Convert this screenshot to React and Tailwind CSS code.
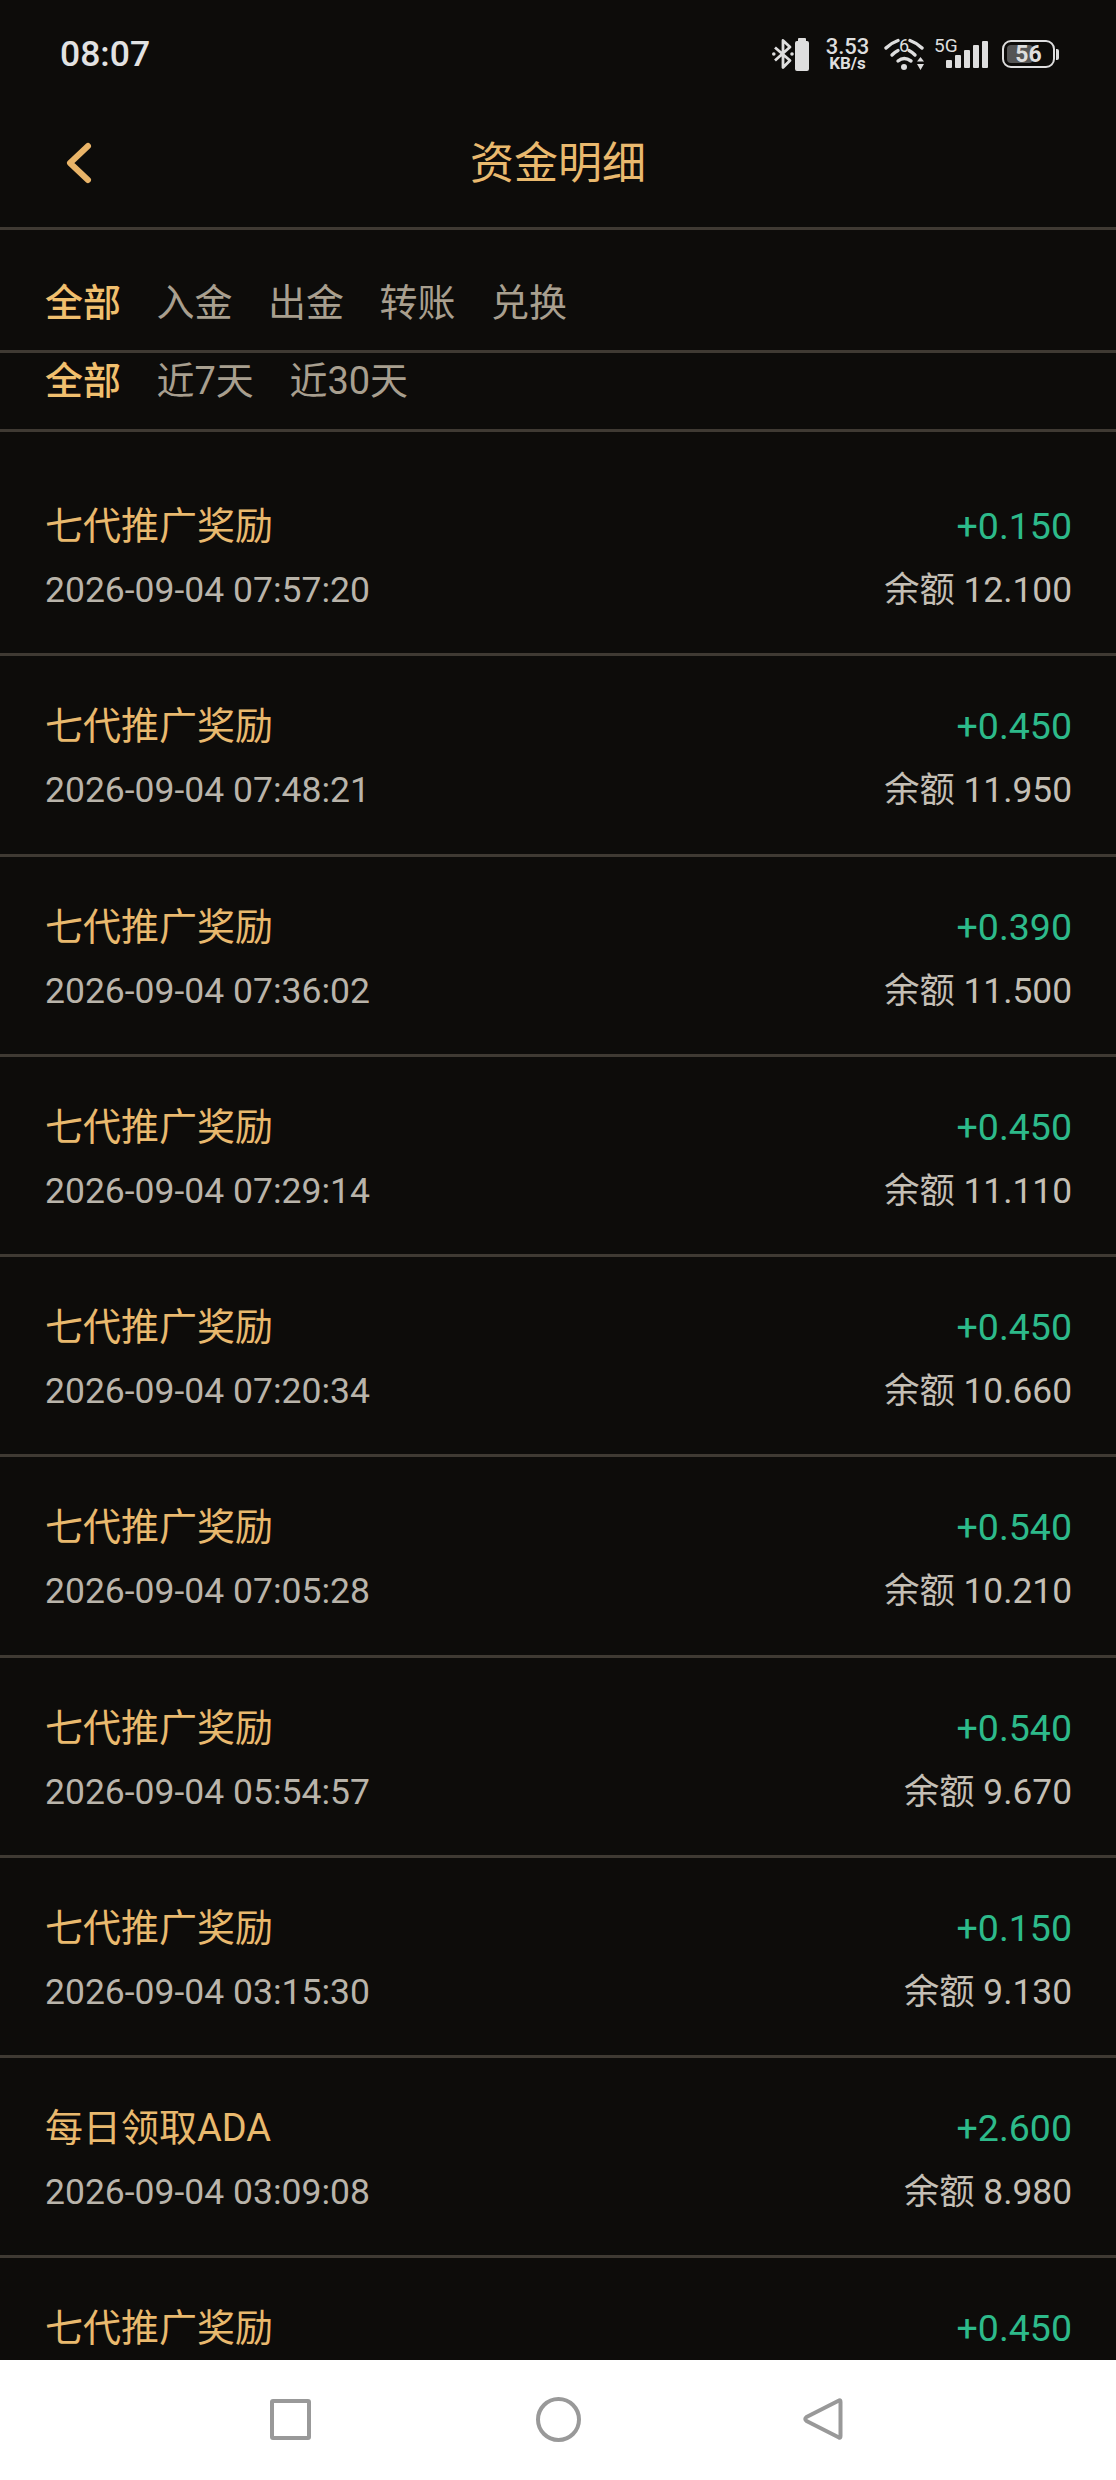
const rows = [
  ['七代推广奖励', '2026-09-04 07:57:20', '+0.150', '12.100'],
  ['七代推广奖励', '2026-09-04 07:48:21', '+0.450', '11.950'],
  ['七代推广奖励', '2026-09-04 07:36:02', '+0.390', '11.500'],
  ['七代推广奖励', '2026-09-04 07:29:14', '+0.450', '11.110'],
  ['七代推广奖励', '2026-09-04 07:20:34', '+0.450', '10.660'],
  ['七代推广奖励', '2026-09-04 07:05:28', '+0.540', '10.210'],
  ['七代推广奖励', '2026-09-04 05:54:57', '+0.540', '9.670'],
  ['七代推广奖励', '2026-09-04 03:15:30', '+0.150', '9.130'],
  ['每日领取ADA', '2026-09-04 03:09:08', '+2.600', '8.980'],
  ['七代推广奖励', '2026-09-04 03:00:00', '+0.450', '8.530'],
];

function StatusIcons() {
  return (
    <div className="flex items-center text-[#dedede]">
      <svg width="37" height="34" viewBox="0 0 37 34" className="mr-[18px]">
        <path d="M3 10.500l15 13-7 7V3.500l7 6.500L3 23.500" fill="none" stroke="#dedede" strokeWidth="2.800" strokeLinejoin="round" />
        <circle cx="1.800" cy="17" r="1.800" fill="#dedede" />
        <circle cx="20" cy="17" r="1.800" fill="#dedede" />
        <path d="M23 6q0-2 2-2h1V2q0-1 1-1h6q1 0 1 1v2h1q2 0 2 2v26q0 2-2 2H25q-2 0-2-2z" fill="#dedede" />
      </svg>
      <div className="w-[41px] flex flex-col items-center mr-[16px] font-medium">
        <span className="text-[22px] leading-[19px]">3.53</span>
        <span className="text-[17px] leading-[15px] font-bold">KB/s</span>
      </div>
      <div className="relative w-[42px] h-[34px] mr-[8px]">
        <svg width="42" height="34" viewBox="0 0 42 34">
          <path d="M2 11Q7 6 14 3.500M26 3.500Q33 6 38 11" fill="none" stroke="#dedede" strokeWidth="3.400" strokeLinecap="round" />
          <path d="M8 18Q11 15 14 13.500M25 13.500Q28 15 31 18" fill="none" stroke="#dedede" strokeWidth="3.400" strokeLinecap="round" />
          <path d="M14 24Q20 19 27 24" fill="none" stroke="#dedede" strokeWidth="3.400" strokeLinecap="round" />
          <circle cx="20" cy="30" r="3" fill="#dedede" />
          <path d="M33 24.500l3.500-4.500 3.500 4.500zM33 27l3.500 6 3.500-6z" fill="#dedede" />
        </svg>
        <span className="absolute left-[15px] top-[-1px] text-[18px] leading-[20px]">6</span>
      </div>
      <div className="relative w-[54px] h-[34px] mr-[14px]">
        <span className="absolute left-0 top-[-1px] text-[19px] leading-[19px]">5G</span>
        <div className="absolute left-[12px] bottom-[3px] flex items-end gap-[3.500px]">
          <div className="w-[5.500px] h-[8px] bg-[#dedede] rounded-[1px]" />
          <div className="w-[5.500px] h-[13px] bg-[#dedede] rounded-[1px]" />
          <div className="w-[5.500px] h-[18px] bg-[#dedede] rounded-[1px]" />
          <div className="w-[5.500px] h-[23px] bg-[#dedede] rounded-[1px]" />
          <div className="w-[5.500px] h-[27px] bg-[#dedede] rounded-[1px]" />
        </div>
      </div>
      <div className="flex items-center">
        <div className="relative w-[53px] h-[28px] rounded-[9px] border-[2.500px] border-[#dedede] flex items-center justify-center">
          <div className="absolute left-[3px] top-[3px] bottom-[3px] w-[26px] bg-[#555] rounded-[4px]" />
          <span className="relative text-[23px] leading-none font-bold">56</span>
        </div>
        <div className="w-[3px] h-[11px] ml-[1px] bg-[#dedede] rounded-r-[2px]" />
      </div>
    </div>
  );
}

function Row({ row }) {
  return (
    <div className="h-[200.250px] shrink-0 pl-[45px] pr-[44px] flex justify-between border-b-[3px] border-[#3f3a33]">
      <div className="flex flex-col pt-[47px]">
        <span className="text-[38px] leading-[46px] text-[#e9b96e]">{row[0]}</span>
        <span className="mt-[18px] text-[35.500px] leading-[46px] text-[#b9b4aa]">{row[1]}</span>
      </div>
      <div className="flex flex-col items-end pt-[47px]">
        <span className="text-[37.500px] leading-[46px] text-[#2dba8a]">{row[2]}</span>
        <span className="mt-[18px] text-[35.300px] leading-[46px] text-[#c4bfb5]">余额 {row[3]}</span>
      </div>
    </div>
  );
}

export default function App() {
  return (
    <div className="w-[1116px] h-[2480px] flex flex-col overflow-hidden bg-[#0d0c0a] font-[Roboto,'Noto_Sans_CJK_SC',sans-serif]">
      {/* status bar */}
      <div className="h-[108px] shrink-0 pl-[60px] pr-[57px] flex items-center justify-between">
        <span className="text-[35.500px] font-medium text-[#e2e2e2] mt-[1px]">08:07</span>
        <StatusIcons />
      </div>

      {/* header */}
      <div className="relative h-[122px] shrink-0 flex items-center justify-center border-b-[3px] border-[#3f3a33]">
        <svg width="30" height="48" viewBox="0 0 30 48" className="absolute left-[64px] top-[31px]">
          <path d="M24 7L6 24l18 17" fill="none" stroke="#e9b468" strokeWidth="6" strokeLinecap="round" strokeLinejoin="round" />
        </svg>
        <span className="text-[44px] leading-none text-[#e9b96e] -mt-[7px]">资金明细</span>
      </div>

      {/* filters */}
      <div className="h-[123px] shrink-0 pl-[45px] pt-[50px] flex gap-[35.500px] text-[38px] leading-[46px] text-[#a89f8f] border-b-[3px] border-[#3f3a33]">
        <span className="text-[#f0bf6e] font-medium">全部</span>
        <span>入金</span>
        <span>出金</span>
        <span>转账</span>
        <span>兑换</span>
      </div>
      <div className="h-[79px] shrink-0 pl-[45px] pt-[5px] flex gap-[35.500px] text-[38px] leading-[46px] text-[#a89f8f] border-b-[3px] border-[#3f3a33]">
        <span className="text-[#f0bf6e] font-medium">全部</span>
        <span>近7天</span>
        <span>近30天</span>
      </div>

      {/* list */}
      <div className="flex-1 min-h-0 overflow-hidden pt-[24px]">
        {rows.map((row, i) => <Row key={i} row={row} />)}
      </div>

      {/* nav bar */}
      <div className="h-[120px] shrink-0 bg-white flex items-center">
        <div className="w-[1116px] flex items-center -mt-[2px] pl-[270px]">
          <div className="w-[41px] h-[41px] rounded-[3px] border-[4px] border-[#999]" />
          <div className="ml-[225px] w-[45px] h-[45px] rounded-full border-[4px] border-[#999]" />
          <svg width="42" height="46" viewBox="0 0 42 46" className="ml-[221px]">
            <path d="M37 4.500Q38.500 3.500 38.500 6v34q0 2.500-1.500 1.500L4.500 25q-2.500-2 0-4z" fill="none" stroke="#999" strokeWidth="4" strokeLinejoin="round" />
          </svg>
        </div>
      </div>
    </div>
  );
}
